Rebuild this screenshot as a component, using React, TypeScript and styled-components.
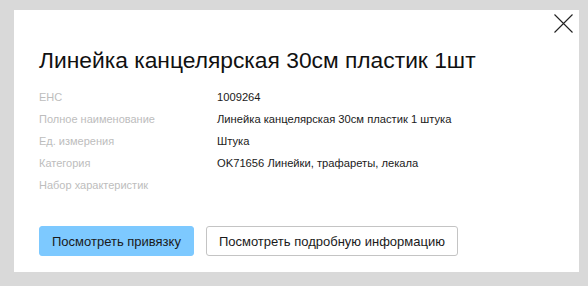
import styled, { createGlobalStyle } from "styled-components";

const GlobalStyle = createGlobalStyle`
    html, body {
        margin: 0;
        padding: 0;
        background: #d9d9d9;
        font-family: "Liberation Sans", Arial, sans-serif;
    }
`

const Page = styled.div`
    width: 588px;
    height: 286px;
    padding: 10px 9px 14px 14px;
    box-sizing: border-box;
`

const Dialog = styled.div`
    position: relative;
    background: #fff;
    height: 262px;
    padding: 0 25px;
    box-sizing: border-box;
    display: flex;
    flex-direction: column;
`

const Close = styled.button`
    position: absolute;
    top: 4px;
    right: 6px;
    width: 19px;
    height: 19px;
    padding: 0;
    border: none;
    background: none;
    cursor: pointer;

    svg {
        display: block;
    }
`

const Title = styled.h1`
    margin: 36px 0 0 0;
    font-size: 22.8px;
    font-weight: normal;
    line-height: 28px;
    color: #111;
`

const Props = styled.dl`
    margin: 12px 0 0 0;
    display: grid;
    grid-template-columns: 178px 1fr;
    grid-auto-rows: 22px;
    font-size: 11px;
    line-height: 22px;

    dt {
        color: #bdbdbd;
    }

    dd {
        margin: 0;
        color: #1a1a1a;
        font-size: 11.2px;
    }
`

const Actions = styled.div`
    margin-top: 30px;
    display: flex;
    gap: 12px;
`

const Button = styled.button<{$primary?: boolean}>`
    height: 30px;
    padding: 0 12px;
    border-radius: 3px;
    font-family: inherit;
    font-size: 13px;
    color: #1a1a1a;
    cursor: pointer;
    background: ${props => props.$primary ? "#7dc9ff" : "#fff"};
    border: 1px solid ${props => props.$primary ? "#7dc9ff" : "#c4c4c4"};
`

const rows: Array<[string, string]> = [
    ["ЕНС", "1009264"],
    ["Полное наименование", "Линейка канцелярская 30см пластик 1 штука"],
    ["Ед. измерения", "Штука"],
    ["Категория", "OK71656 Линейки, трафареты, лекала"],
    ["Набор характеристик", ""],
]

function App() {
    return (
        <Page>
            <GlobalStyle />
            <Dialog>
                <Close aria-label="Закрыть">
                    <svg width="19" height="19" viewBox="0 0 19 19">
                        <path d="M0.5 0.5 L18.5 18.5 M18.5 0.5 L0.5 18.5" stroke="#222" strokeWidth="1.1" fill="none" />
                    </svg>
                </Close>
                <Title>Линейка канцелярская 30см пластик 1шт</Title>
                <Props>
                    {rows.map(([label, value], index) => (
                        <>
                            <dt key={"l" + index}>{label}</dt>
                            <dd key={"v" + index}>{value}</dd>
                        </>
                    ))}
                </Props>
                <Actions>
                    <Button $primary>Посмотреть привязку</Button>
                    <Button>Посмотреть подробную информацию</Button>
                </Actions>
            </Dialog>
        </Page>
    );
}

export default App;
